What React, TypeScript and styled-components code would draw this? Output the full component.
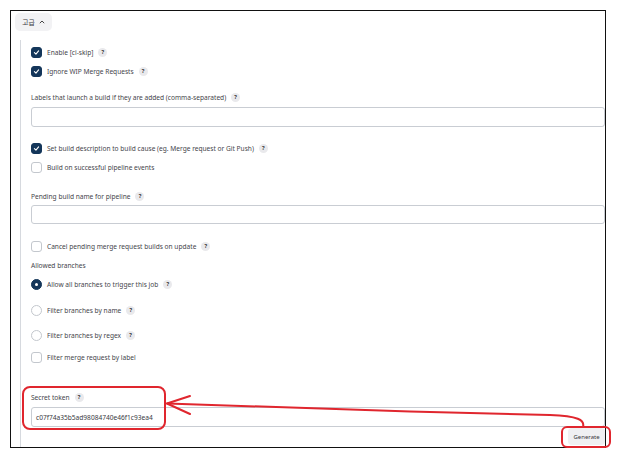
import { createGlobalStyle, styled } from "styled-components"

const GlobalStyle = createGlobalStyle`
  html, body {
    margin: 0;
    padding: 0;
    background: #fff;
  }
  body {
    font-family: "Noto Sans", "Noto Sans CJK KR", sans-serif;
    color: #45454b;
  }
`

const Page = styled.div`
  position: relative;
  width: 619px;
  height: 459px;
  overflow: hidden;
`

const Frame = styled.div`
  box-sizing: border-box;
  margin: 10px 0 0 10px;
  width: 596px;
  height: 438px;
  border: 1.5px solid #111;
  display: flex;
  flex-direction: column;
  overflow: hidden;
`

const AdvancedButton = styled.div`
  margin: 2px 0 0 4px;
  width: 37px;
  height: 18px;
  border-radius: 5px;
  background: #f2f2f4;
  display: flex;
  align-items: center;
  justify-content: center;
  gap: 4px;
  font-family: "Noto Sans CJK KR", sans-serif;
  font-size: 6.8px;
  color: #3a3a3f;
`

const Section = styled.div`
  flex: 1;
  margin: 9px 0 0 9px;
  padding: 5px 0 0 10px;
  border-left: 1px solid #d6d9de;
  display: flex;
  flex-direction: column;
`

const Row = styled.div<{ $mt: number }>`
  margin-top: ${({ $mt }) => $mt}px;
  height: 14px;
  display: flex;
  align-items: center;
  gap: 5px;
  font-size: 6.6px;
  white-space: nowrap;
`

const Label = styled.div<{ $mt: number }>`
  margin-top: ${({ $mt }) => $mt}px;
  height: 10px;
  display: flex;
  align-items: center;
  gap: 5px;
  font-size: 6.6px;
  white-space: nowrap;
`

const Box = styled.span<{ $checked?: boolean }>`
  box-sizing: border-box;
  width: 11px;
  height: 11px;
  flex: none;
  border-radius: 3px;
  display: flex;
  align-items: center;
  justify-content: center;
  background: ${({ $checked }) => ($checked ? "#14365a" : "#fff")};
  border: 1px solid ${({ $checked }) => ($checked ? "#14365a" : "#c3c7cd")};
`

const Radio = styled.span<{ $checked?: boolean }>`
  box-sizing: border-box;
  width: 11px;
  height: 11px;
  flex: none;
  border-radius: 50%;
  display: flex;
  align-items: center;
  justify-content: center;
  background: ${({ $checked }) => ($checked ? "#14365a" : "#fff")};
  border: 1px solid ${({ $checked }) => ($checked ? "#14365a" : "#c3c7cd")};

  &::after {
    content: "";
    display: ${({ $checked }) => ($checked ? "block" : "none")};
    width: 3px;
    height: 3px;
    border-radius: 50%;
    background: #fff;
  }
`

const Help = styled.span`
  width: 9px;
  height: 9px;
  flex: none;
  border-radius: 50%;
  background: #e9e9ec;
  color: #333;
  font-size: 5.5px;
  font-weight: 700;
  display: flex;
  align-items: center;
  justify-content: center;
`

const TextInput = styled.div<{ $mt: number; $h: number }>`
  box-sizing: border-box;
  margin-top: ${({ $mt }) => $mt}px;
  height: ${({ $h }) => $h}px;
  width: 100%;
  border: 1px solid #c9cdd3;
  border-radius: 3px;
  padding-left: 4px;
  display: flex;
  align-items: center;
  font-size: 6.6px;
  color: #3a3a3f;
`

const ButtonRow = styled.div`
  margin-top: 1px;
  display: flex;
  justify-content: flex-end;
`

const GenerateButton = styled.div`
  width: 37px;
  height: 17px;
  border-radius: 4px;
  background: #f0f0f2;
  display: flex;
  align-items: center;
  justify-content: center;
  font-size: 6px;
  color: #3a3a3f;
`

const Overlay = styled.svg`
  position: absolute;
  left: 0;
  top: 0;
  pointer-events: none;
`

function Check() {
  return (
    <svg width="7" height="7" viewBox="0 0 10 10">
      <path d="M2 5.3 L4.2 7.4 L8 2.8" fill="none" stroke="#fff" strokeWidth="1.6" strokeLinecap="round" strokeLinejoin="round" />
    </svg>
  )
}

function CheckRow({ mt, checked, text, help }: { mt: number; checked?: boolean; text: string; help?: boolean }) {
  return (
    <Row $mt={mt}>
      <Box $checked={checked}>{checked && <Check />}</Box>
      <span>{text}</span>
      {help && <Help>?</Help>}
    </Row>
  )
}

function RadioRow({ mt, checked, text, help }: { mt: number; checked?: boolean; text: string; help?: boolean }) {
  return (
    <Row $mt={mt}>
      <Radio $checked={checked} />
      <span>{text}</span>
      {help && <Help>?</Help>}
    </Row>
  )
}

function Annotations() {
  return (
    <Overlay width="619" height="459" viewBox="0 0 619 459">
      <g fill="none" stroke="#e0262e" strokeWidth="2" strokeLinecap="round" strokeLinejoin="round">
        <rect x="23" y="387" width="142" height="42" rx="7" />
        <rect x="562" y="427" width="48" height="20" rx="5" />
        <path d="M583 427 C 585 420, 578 416, 550 415 L 410 411.5 L 167 403.5" />
        <path d="M190 396 L167 403.5 L190 414" />
      </g>
    </Overlay>
  )
}

export default function App() {
  return (
    <Page>
      <GlobalStyle />
      <Frame>
        <AdvancedButton>
          <span>고급</span>
          <svg width="6" height="4" viewBox="0 0 6 4">
            <path d="M0.8 3.2 L3 1 L5.2 3.2" fill="none" stroke="#333" strokeWidth="0.9" />
          </svg>
        </AdvancedButton>
        <Section>
          <CheckRow mt={0} checked text="Enable [ci-skip]" help />
          <CheckRow mt={5} checked text="Ignore WIP Merge Requests" help />
          <Label $mt={14}>
            <span>Labels that launch a build if they are added (comma-separated)</span>
            <Help>?</Help>
          </Label>
          <TextInput $mt={5} $h={20} />
          <CheckRow mt={14} checked text="Set build description to build cause (eg. Merge request or Git Push)" help />
          <CheckRow mt={5} text="Build on successful pipeline events" />
          <Label $mt={17}>
            <span>Pending build name for pipeline</span>
            <Help>?</Help>
          </Label>
          <TextInput $mt={4} $h={19} />
          <CheckRow mt={15} text="Cancel pending merge request builds on update" help />
          <Label $mt={7}>
            <span>Allowed branches</span>
          </Label>
          <RadioRow mt={7} checked text="Allow all branches to trigger this job" help />
          <RadioRow mt={12} text="Filter branches by name" help />
          <RadioRow mt={11} text="Filter branches by regex" help />
          <CheckRow mt={8} text="Filter merge request by label" />
          <Label $mt={28}>
            <span>Secret token</span>
            <Help>?</Help>
          </Label>
          <TextInput $mt={5} $h={20}>c07f74a35b5ad98084740e46f1c93ea4</TextInput>
          <ButtonRow>
            <GenerateButton>Generate</GenerateButton>
          </ButtonRow>
        </Section>
      </Frame>
      <Annotations />
    </Page>
  )
}
